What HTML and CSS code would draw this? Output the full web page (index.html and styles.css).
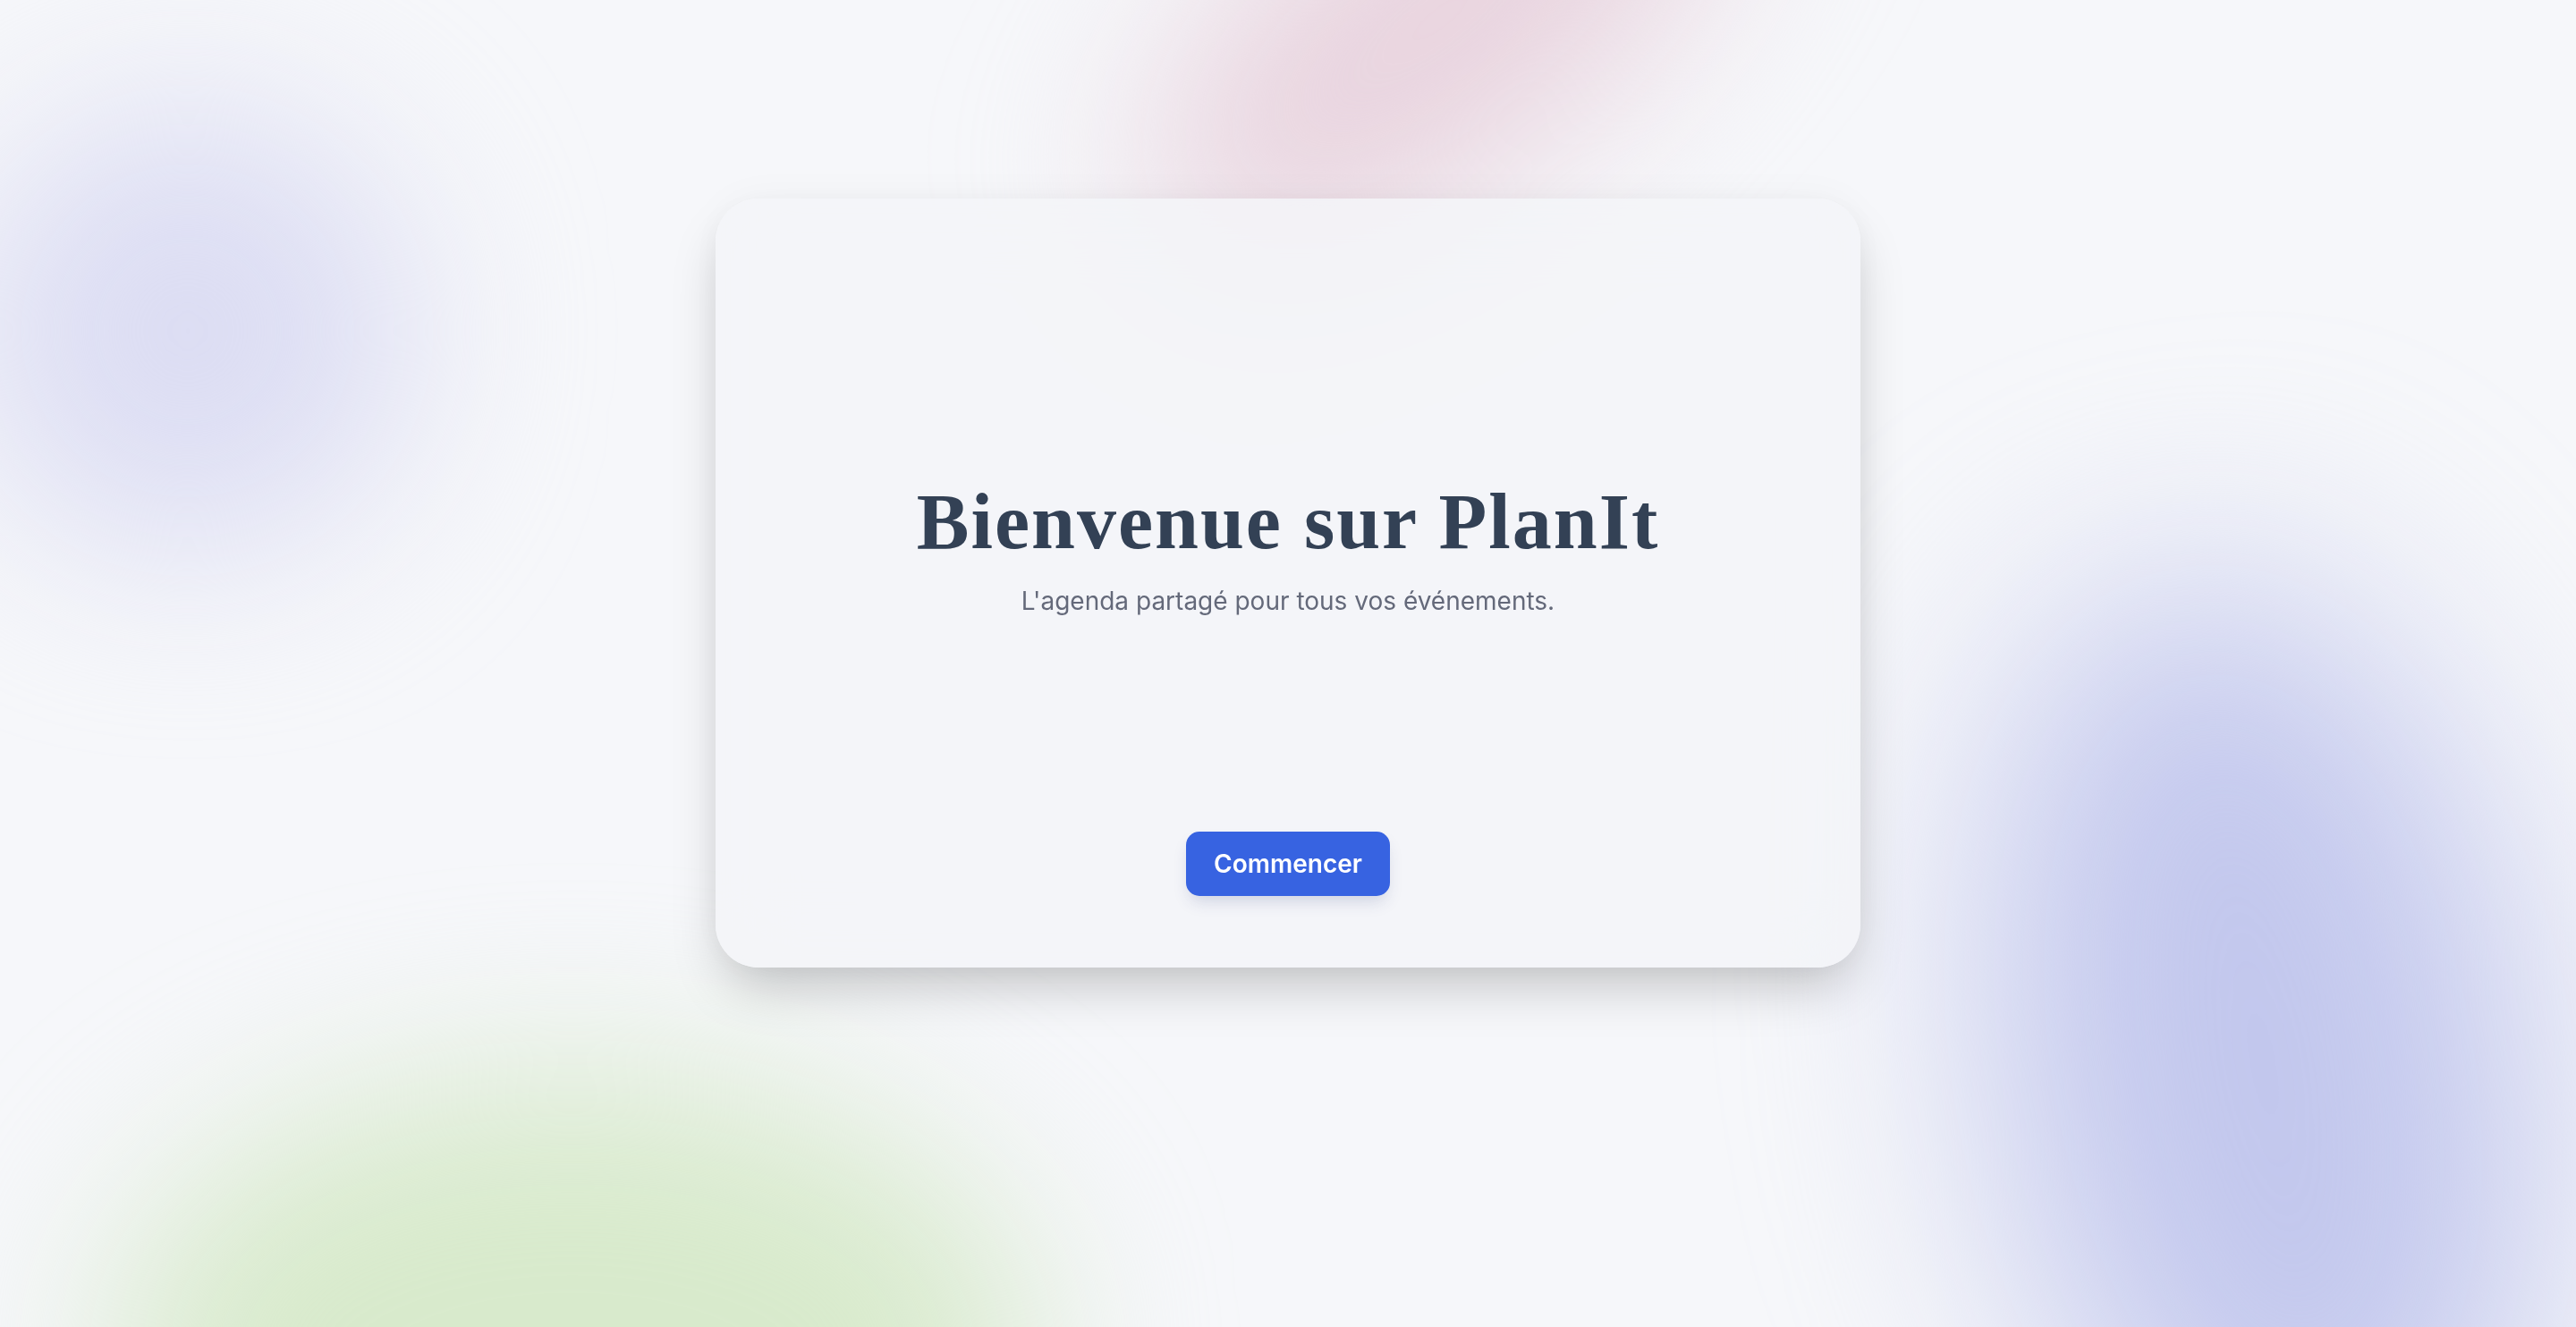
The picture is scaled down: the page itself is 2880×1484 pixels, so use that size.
FILE: index.html
```html
<!DOCTYPE html>
<html lang="fr">
<head>
<meta charset="utf-8">
<title>PlanIt</title>
<link rel="stylesheet" href="styles.css">
</head>
<body>
<div class="backdrop" aria-hidden="true">
  <div class="blob blob-pink"></div>
  <div class="blob blob-violet"></div>
  <div class="blob blob-green"></div>
  <div class="blob blob-blue"></div>
</div>
<div class="page">
  <main class="card">
    <div class="intro">
      <h1 class="title">Bienvenue sur PlanIt</h1>
      <p class="subtitle">L'agenda partagé pour tous vos événements.</p>
    </div>
    <button class="cta" type="button">Commencer</button>
  </main>
</div>
</body>
</html>
```

FILE: styles.css
```css
html, body {
  margin: 0;
  padding: 0;
  height: 100%;
}
body {
  background-color: #f6f7fa;
  font-family: "Inter", "Liberation Sans", sans-serif;
  overflow: hidden;
}
.backdrop {
  position: fixed;
  inset: 0;
  overflow: hidden;
  z-index: 0;
}
.blob {
  position: absolute;
  border-radius: 50%;
  filter: blur(100px);
}
.blob-pink {
  left: 1220px;
  top: -150px;
  width: 780px;
  height: 340px;
  background: #e8d2dd;
  transform: rotate(-38deg);
}
.blob-violet {
  left: -40px;
  top: 120px;
  width: 500px;
  height: 500px;
  background: #dcddf3;
}
.blob-green {
  left: 120px;
  top: 1200px;
  width: 1040px;
  height: 620px;
  background: #d8eacc;
}
.blob-blue {
  left: 2230px;
  top: 640px;
  width: 600px;
  height: 1100px;
  background: #c2c7ed;
  filter: blur(130px);
  transform: rotate(-10deg);
}
.page {
  position: relative;
  z-index: 1;
  display: flex;
  flex-direction: column;
  align-items: center;
  padding-top: 222px;
}
.card {
  width: 1280px;
  height: 860px;
  box-sizing: border-box;
  padding: 80px;
  border-radius: 48px;
  background: rgba(243, 244, 248, 0.84);
  backdrop-filter: blur(40px);
  box-shadow: 0 30px 60px -12px rgba(0, 0, 0, 0.22), 0 0 44px rgba(0, 0, 0, 0.04);
  display: flex;
  flex-direction: column;
  align-items: center;
}
.intro {
  flex: 1;
  display: flex;
  flex-direction: column;
  align-items: center;
  justify-content: center;
  padding-bottom: 8px;
}
.title {
  margin: 0;
  font-family: "Liberation Serif", "Times New Roman", serif;
  font-weight: 700;
  font-size: 88px;
  line-height: 1.2;
  letter-spacing: 2px;
  color: #334155;
}
.subtitle {
  margin: 15px 0 0;
  font-size: 28px;
  line-height: 1.5;
  color: #64697a;
}
.cta {
  width: 228px;
  height: 72px;
  border: 0;
  border-radius: 15px;
  background: #3763e1;
  color: #ffffff;
  font-family: "Inter", "Liberation Sans", sans-serif;
  font-weight: 600;
  font-size: 28px;
  box-shadow: 0 10px 18px -4px rgba(40, 60, 120, 0.18);
  cursor: pointer;
}
```
